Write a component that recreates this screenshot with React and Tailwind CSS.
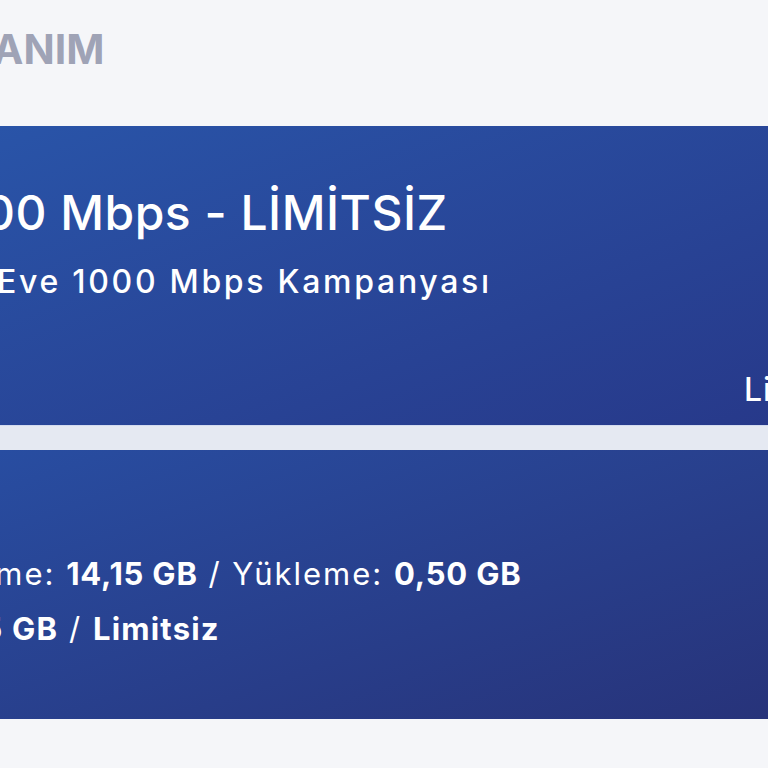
import React from "react";

export default function App() {
  return (
    <div
      className="w-[768px] h-[768px] overflow-hidden bg-[#f5f6f9] flex flex-col"
      style={{ fontFamily: "Inter, 'Noto Sans', sans-serif" }}
    >
      <div className="h-[126px] shrink-0 flex items-start pt-[25px]">
        <div className="ml-[-113px] text-[41px] font-bold text-[#9fa3b6] whitespace-nowrap leading-[48px]">
          KULLANIM
        </div>
      </div>

      <div className="h-[299px] shrink-0 bg-gradient-to-br from-[#2954a8] to-[#27398a] flex flex-col relative">
        <div className="ml-[-68px] mt-[58px] text-[48px] font-medium tracking-[0.5px] text-white whitespace-nowrap leading-[58px]">
          1000 Mbps - LİMİTSİZ
        </div>
        <div className="ml-[-3px] mt-[20px] text-[32px] font-medium tracking-[2.7px] text-white whitespace-nowrap leading-[40px]">
          Eve 1000 Mbps Kampanyası
        </div>
        <div className="absolute left-[744px] top-[244px] text-[32px] font-medium tracking-[1px] text-white whitespace-nowrap leading-[40px]">
          Limitsiz
        </div>
      </div>

      <div className="h-[25px] shrink-0 bg-[#e5e9f2] border-t border-[#d3dbef]" />

      <div className="h-[269px] shrink-0 bg-gradient-to-br from-[#284da1] to-[#27337a] flex flex-col">
        <div className="ml-[-80px] mt-[104px] text-[31px] tracking-[2px] text-white whitespace-nowrap leading-[40px]">
          İndirme: <span className="font-bold tracking-[0.8px]">14,15 GB</span> / Yükleme: <span className="font-bold tracking-[0.8px]">0,50 GB</span>
        </div>
        <div className="ml-[-226px] mt-[15px] text-[31px] tracking-[2px] text-white whitespace-nowrap leading-[40px]">
          Toplam: <span className="font-bold tracking-[1.2px]">14,65 GB</span> / <span className="font-bold tracking-[1.2px]">Limitsiz</span>
        </div>
      </div>
    </div>
  );
}
